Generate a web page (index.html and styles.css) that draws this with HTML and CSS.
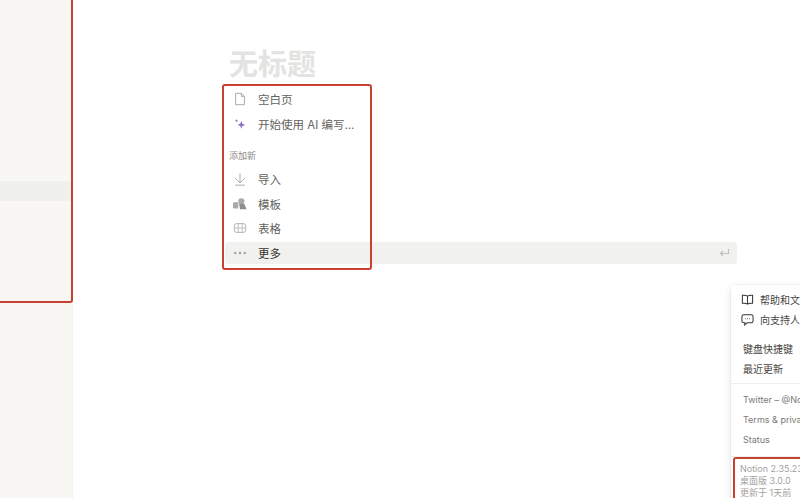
FILE: index.html
```html
<!DOCTYPE html>
<html lang="zh-CN">
<head>
  <meta charset="UTF-8">
  <title>无标题</title>
  <link rel="stylesheet" href="styles.css">
</head>
<body>
  <aside class="sidebar">
    <div class="sidebar-active"></div>
    <div class="mark mark-sidebar"></div>
  </aside>

  <main class="page">
    <h1 class="title">无标题</h1>
    <ul class="menu">
      <li class="row">
        <svg class="icon" viewBox="0 0 16 16" fill="none" stroke="#aaa9a5" stroke-width="1.1"><path d="M3 1.500h6.500L13 5v9.500H3z"/><path d="M9.500 1.500V5H13"/></svg>
        <span>空白页</span>
      </li>
      <li class="row">
        <svg class="icon" viewBox="0 0 16 16"><path d="M9.500 4.500l1.200 3.300 3.300 1.200-3.300 1.200-1.200 3.300-1.200-3.300-3.300-1.200 3.300-1.200z" fill="#8d6fc4"/><path d="M4 2l.6 1.600 1.600.6-1.600.6L4 6.400l-.6-1.600-1.600-.6 1.600-.6z" fill="#6f8fc8"/></svg>
        <span>开始使用 AI 编写...</span>
      </li>
      <li class="group-label">添加新</li>
      <li class="row">
        <svg class="icon" viewBox="0 0 16 16" fill="none" stroke="#aaa9a5" stroke-width="1.1"><path d="M8 1.500v11M2.500 7L8 12.500 13.500 7M2.500 15h11"/></svg>
        <span>导入</span>
      </li>
      <li class="row">
        <svg class="icon" viewBox="0 0 16 16" fill="#aaa9a5"><rect x="0" y="6" width="6" height="7" rx="1"/><circle cx="9.500" cy="5" r="3.500"/><path d="M7 8h6l2.500 6H8z" fill="#8f8e8a"/></svg>
        <span>模板</span>
      </li>
      <li class="row">
        <svg class="icon" viewBox="0 0 16 16" fill="none" stroke="#aaa9a5" stroke-width="1"><rect x="1.500" y="3" width="13" height="10" rx="2.500"/><path d="M1.500 8h13M6 3v10M10.500 3v10" stroke-width=".8"/></svg>
        <span>表格</span>
      </li>
      <li class="row row-active">
        <svg class="icon" viewBox="0 0 16 16" fill="#aaa9a5"><circle cx="2.500" cy="8" r="1.500"/><circle cx="8" cy="8" r="1.500"/><circle cx="13.500" cy="8" r="1.500"/></svg>
        <span>更多</span>
        <svg class="enter" viewBox="0 0 12 12" fill="none" stroke="#c2c1bd" stroke-width="1.2"><path d="M10.500 2v4.500H2.500M5 4L2.500 6.500 5 9"/></svg>
      </li>
    </ul>
    <div class="mark mark-menu"></div>
  </main>

  <div class="help">
    <div class="help-group">
      <div class="help-row">
        <svg class="help-icon" viewBox="0 0 14 14" fill="none" stroke="#37352f" stroke-width="1.1"><path d="M7 3.500C6 2.500 4 2.300 1.500 2.500v8.500C4 10.800 6 11 7 12c1-1 3-1.200 5.500-1V2.500C10 2.300 8 2.500 7 3.500zM7 3.500V12"/></svg>
        <span>帮助和文档</span>
      </div>
      <div class="help-row">
        <svg class="help-icon" viewBox="0 0 14 14" fill="none" stroke="#37352f" stroke-width="1.1"><path d="M3 2h8a2 2 0 0 1 2 2v4.500a2 2 0 0 1-2 2H6.500L4 12.800V10.500H3a2 2 0 0 1-2-2V4a2 2 0 0 1 2-2z"/><path d="M4.300 6.200h.8M6.600 6.200h.8M8.900 6.200h.8"/></svg>
        <span>向支持人员发送消息</span>
      </div>
    </div>
    <div class="help-group help-plain">
      <div class="help-row">键盘快捷键</div>
      <div class="help-row">最近更新</div>
    </div>
    <div class="help-group help-links">
      <div class="help-row">Twitter – @NotionHQ</div>
      <div class="help-row">Terms &amp; privacy</div>
      <div class="help-row">Status</div>
    </div>
    <div class="help-version">
      <div>Notion 2.35.23</div>
      <div>桌面版 3.0.0</div>
      <div>更新于 1天前</div>
    </div>
    <div class="mark mark-version"></div>
  </div>
</body>
</html>
```

FILE: styles.css
```css
* { box-sizing: border-box; }

html, body {
  height: 100%;
}

body {
  margin: 0;
  display: flex;
  overflow: hidden;
  position: relative;
  background: #fff;
  color: #37352f;
  font-family: "Inter", "Noto Sans CJK SC", sans-serif;
}

.sidebar {
  width: 73px;
  flex: none;
  position: relative;
  padding-top: 181px;
  background: #f8f7f4;
  border-right: 1px solid #f3f2ef;
}

.sidebar-active {
  height: 20px;
  background: #f0f0ed;
}

.page {
  flex: 1;
  position: relative;
  padding: 47px 0 0 152px;
}

.title {
  margin: 0 0 5px 4px;
  font-size: 29px;
  line-height: 36px;
  font-weight: 700;
  color: #e3e3e1;
}

.menu {
  list-style: none;
  margin: 0;
  padding: 0;
  width: 512px;
}

.row {
  display: flex;
  align-items: center;
  height: 22px;
  margin-bottom: 2.500px;
  padding-left: 8px;
  gap: 11px;
  font-size: 11.500px;
  color: #65635e;
  border-radius: 3px;
}

.row-active {
  background: #f1f1ef;
  color: #37352f;
}

.icon {
  width: 14px;
  height: 14px;
  flex: none;
}

.enter {
  width: 12px;
  height: 12px;
  margin-left: auto;
  margin-right: 7px;
}

.group-label {
  font-size: 9px;
  line-height: 12px;
  margin: 15px 0 6.500px 4px;
  color: #8a8985;
}

.help {
  position: absolute;
  left: 731px;
  top: 285px;
  width: 220px;
  height: 240px;
  background: #fff;
  border-radius: 4px;
  box-shadow: 0 0 0 1px rgba(15, 15, 15, 0.04), 0 3px 10px rgba(15, 15, 15, 0.1);
  font-size: 10px;
}

.help-group {
  padding: 4px 0;
}

.help-row {
  display: flex;
  align-items: center;
  gap: 6px;
  height: 20px;
  padding-left: 10px;
  white-space: nowrap;
  color: #45433e;
}

.help-plain {
  padding: 0 0 5px 2px;
  margin-top: 5px;
  border-bottom: 1px solid #ededec;
}

.help-links {
  padding: 5px 0 7px 2px;
  border-bottom: 1px solid #ededec;
}

.help-links .help-row {
  font-size: 9px;
  color: #7a7974;
}

.help-icon {
  width: 13px;
  height: 13px;
  flex: none;
}

.help-version {
  padding: 6px 0 0 9px;
  font-size: 9px;
  line-height: 12px;
  color: #a3a29f;
}

.mark {
  position: absolute;
  border: 2px solid #c8402f;
  border-radius: 3px;
  pointer-events: none;
}

.mark-sidebar {
  left: -10px;
  right: -1px;
  top: -10px;
  height: 313px;
}

.mark-menu {
  left: 149px;
  top: 84px;
  width: 150px;
  height: 186px;
}

.mark-version {
  left: 2px;
  top: 172px;
  width: 240px;
  height: 80px;
}
```
